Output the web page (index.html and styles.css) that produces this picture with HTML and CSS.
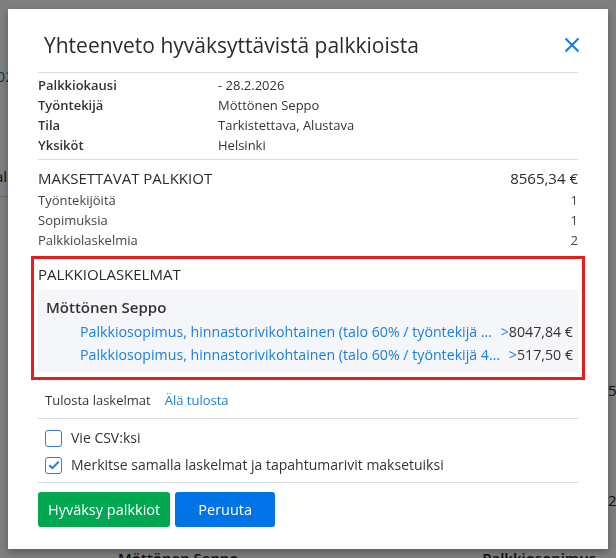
FILE: index.html
```html
<!DOCTYPE html>
<html lang="fi">
<head>
	<meta charset="utf-8" />
	<title>Palkkiot</title>
	<link rel="stylesheet" href="styles.css">
</head>
<body>
	<div class="page">
		<div class="page-link">2026</div>
		<div class="page-tab">Palkkiot</div>
		<div class="page-line"></div>
		<div class="page-num page-num-a">5</div>
		<div class="page-num page-num-b">2026</div>
		<div class="page-foot">
			<span>Möttönen Seppo</span>
			<span>Palkkiosopimus</span>
		</div>
	</div>

	<div class="backdrop">
		<div class="modal">
			<header class="modal-head">
				<h1>Yhteenveto hyväksyttävistä palkkioista</h1>
				<button class="close" type="button" aria-label="Sulje">
					<svg width="16" height="16" viewBox="0 0 16 16">
						<path d="M1.5 1.5 L14.5 14.5 M14.5 1.5 L1.5 14.5" stroke="#1a7fe0" stroke-width="2.2" fill="none" />
					</svg>
				</button>
			</header>

			<section class="info">
				<div class="info-row"><span class="key">Palkkiokausi</span><span> - 28.2.2026</span></div>
				<div class="info-row"><span class="key">Työntekijä</span><span>Möttönen Seppo</span></div>
				<div class="info-row"><span class="key">Tila</span><span>Tarkistettava, Alustava</span></div>
				<div class="info-row"><span class="key">Yksiköt</span><span>Helsinki</span></div>
			</section>

			<section class="totals">
				<div class="total-row total-main"><span>MAKSETTAVAT PALKKIOT</span><span>8565,34 €</span></div>
				<div class="total-row"><span>Työntekijöitä</span><span>1</span></div>
				<div class="total-row"><span>Sopimuksia</span><span>1</span></div>
				<div class="total-row"><span>Palkkiolaskelmia</span><span>2</span></div>
			</section>

			<section class="calcs">
				<h2>PALKKIOLASKELMAT</h2>
				<div class="calc-group">
					<div class="calc-name">Möttönen Seppo</div>
					<div class="calc-row">
						<a href="#" class="calc-link">Palkkiosopimus, hinnastorivikohtainen (talo 60% / työntekijä 40%)</a>
						<span class="calc-arrow">&gt;</span><span class="calc-sum">8047,84 €</span>
					</div>
					<div class="calc-row">
						<a href="#" class="calc-link">Palkkiosopimus, hinnastorivikohtainen (talo 60% / työntekijä 40%), lisät</a>
						<span class="calc-arrow">&gt;</span><span class="calc-sum">517,50 €</span>
					</div>
				</div>
			</section>

			<div class="print">
				<span>Tulosta laskelmat</span>
				<a href="#">Älä tulosta</a>
			</div>

			<section class="options">
				<label class="check"><span class="box"></span>Vie CSV:ksi</label>
				<label class="check"><span class="box checked">
					<svg width="12" height="10" viewBox="0 0 12 10"><path d="M1.3 5.2 L4.4 8.2 L10.7 1.6" stroke="#1a7fe0" stroke-width="2" fill="none" /></svg>
				</span>Merkitse samalla laskelmat ja tapahtumarivit maksetuiksi</label>
			</section>

			<footer class="actions">
				<button class="btn btn-green" type="button">Hyväksy palkkiot</button>
				<button class="btn btn-blue" type="button">Peruuta</button>
			</footer>
		</div>
	</div>
</body>
</html>
```

FILE: styles.css
```css
body {
	margin: 0;
	background-color: #ffffff;
	font-family: 'Open Sans', 'Noto Sans', Arial, sans-serif;
	color: #333333;
}

/* Page behind the dialog
 * ====================== */

.page {
	height: 558px;
	overflow: hidden;
	font-size: 15px;
	color: #222222;
	line-height: 20px;
}

.page-link {
	color: #1a5fa8;
	margin: 66px 0 0 -12px;
}

.page-tab {
	margin: 80px 0 0 -14px;
}

.page-line {
	margin-top: 10px;
	height: 1px;
	background: #cccccc;
	width: 40px;
}

.page-num {
	padding-left: 608px;
}

.page-num-a {
	margin-top: 183px;
}

.page-num-b {
	margin-top: 90px;
}

.page-foot {
	display: flex;
	justify-content: space-between;
	padding: 38px 20px 0 118px;
	font-weight: 600;
}

.backdrop {
	position: fixed;
	left: 0;
	top: 0;
	right: 0;
	bottom: 0;
	background-color: rgba(0, 0, 0, 0.5);
	padding: 9px 8px;
}

/* Dialog
 * ====== */

.modal {
	background: #ffffff;
	height: 540px;
	box-sizing: border-box;
	padding: 0 30px;
	box-shadow: 0 3px 8px rgba(0, 0, 0, 0.3);
	font-size: 13px;
}

.modal-head {
	display: flex;
	justify-content: space-between;
	align-items: flex-start;
	padding: 20px 0 11px 6px;
	border-bottom: 1px solid #d5dee8;
}

.modal-head h1 {
	margin: 0;
	font-size: 21px;
	font-weight: 400;
	color: #2b2b2b;
	line-height: 32px;
}

.close {
	border: 0;
	background: none;
	padding: 0;
	margin: 8px -2px 0 0;
	cursor: pointer;
}

.info {
	padding: 2px 0 4px;
	border-bottom: 1px solid #d5dee8;
}

.info-row {
	display: grid;
	grid-template-columns: 180px 1fr;
	line-height: 20px;
	color: #333333;
}

.info-row .key {
	font-weight: 600;
}

.totals {
	padding: 6px 0 4px;
}

.total-row {
	display: flex;
	justify-content: space-between;
	line-height: 20px;
	color: #444444;
}

.total-main {
	font-size: 15px;
	line-height: 24px;
	color: #2b2b2b;
}

.calcs {
	margin: 2px -7px 0;
	border: 3px solid #e41e1e;
	padding: 4px 4px 5px 4px;
}

.calcs h2 {
	margin: 0;
	font-size: 15px;
	font-weight: 400;
	color: #2b2b2b;
	line-height: 22px;
}

.calc-group {
	background: #f4f6f9;
	margin-top: 5px;
	padding: 5px 5px 6px 8px;
}

.calc-name {
	font-size: 15px;
	font-weight: 600;
	color: #333333;
	line-height: 24px;
	margin-bottom: 1px;
}

.calc-row {
	display: flex;
	align-items: baseline;
	padding-left: 34px;
	line-height: 23px;
	font-size: 14.2px;
}

.calc-link {
	flex: 1;
	min-width: 0;
	white-space: nowrap;
	overflow: hidden;
	text-overflow: ellipsis;
	color: #1a7fe0;
	text-decoration: none;
}

.calc-arrow {
	color: #1a7fe0;
	padding-left: 6px;
}

.calc-sum {
	color: #333333;
}

.print {
	display: flex;
	gap: 14px;
	padding: 10px 0 8px 7px;
	border-bottom: 1px solid #d5dee8;
	line-height: 20px;
}

.print a {
	color: #1a7fe0;
	text-decoration: none;
}

.options {
	padding: 6px 0 3px 7px;
	border-bottom: 1px solid #d5dee8;
}

.check {
	display: flex;
	align-items: center;
	gap: 9px;
	line-height: 20px;
	padding: 3px 0 4px;
	font-size: 14px;
}

.box {
	width: 15px;
	height: 15px;
	border: 1px solid #3a7dd8;
	border-radius: 3px;
	display: flex;
	align-items: center;
	justify-content: center;
}

.actions {
	display: flex;
	gap: 5px;
	padding-top: 9px;
}

.btn {
	border: 0;
	border-radius: 3px;
	color: #ffffff;
	font-family: inherit;
	font-size: 14.5px;
	height: 35px;
	padding: 0 10px;
}

.btn-green {
	background-color: #00a951;
}

.btn-blue {
	background-color: #0073e6;
	width: 100px;
}
```
